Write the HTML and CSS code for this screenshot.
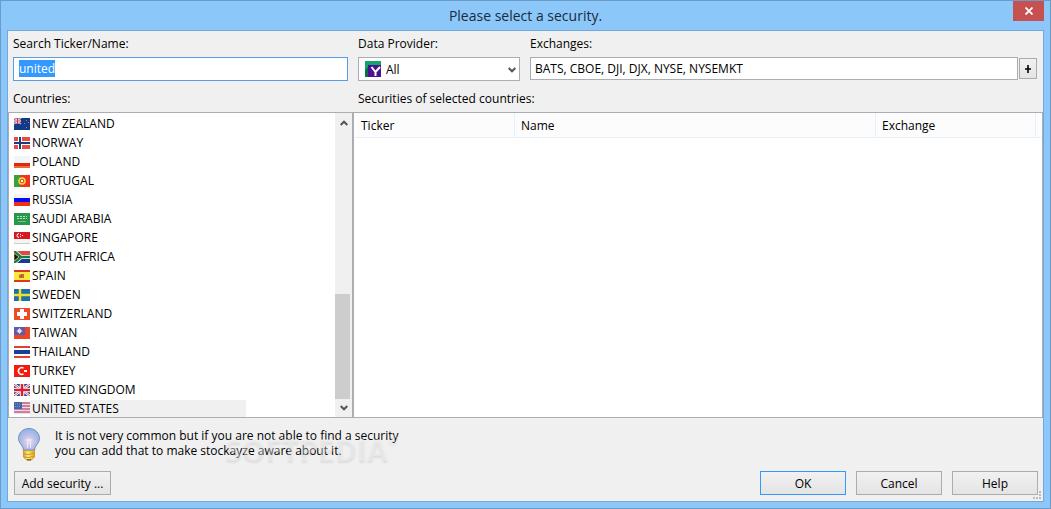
FILE: index.html
```html
<!DOCTYPE html>
<html lang="en">
<head>
<meta charset="utf-8">
<title>Please select a security.</title>
<link rel="stylesheet" href="styles.css">
</head>
<body>
<div class="window">
  <header class="titlebar">
    <h1 class="title">Please select a security.</h1>
    <button class="close" type="button" aria-label="Close"><svg width="8" height="8" viewBox="0 0 8 8"><path d="M.5 .5L7.500 7.500M7.500 .5L.5 7.500" stroke="#fff" stroke-width="1.800"/></svg></button>
  </header>
  <main class="client">
    <form class="filters">
      <div class="field">
        <label for="search">Search Ticker/Name:</label>
        <input class="box search" id="search" type="text" value="united" autocomplete="off" spellcheck="false">
      </div>
      <div class="field">
        <label for="provider">Data Provider:</label>
        <div class="combo">
          <select class="box provider" id="provider"><option>All</option></select>
          <svg class="combo-icon" width="16" height="16" viewBox="0 0 16 16"><path d="M0 0h16v16H0z" fill="#12a66a"/><path d="M0 9l4-4v11H0z" fill="#0b6e48"/><path d="M3 4h13v12H3z" fill="#4b1294"/><path d="M6.500 6L10.500 11 15 6M10.500 10.500V15" fill="none" stroke="#fff" stroke-width="2"/></svg>
          <svg class="combo-arrow" width="8" height="6" viewBox="0 0 8 6"><path d="M.7 1L4 4.300 7.300 1" fill="none" stroke="#555" stroke-width="2"/></svg>
        </div>
      </div>
      <div class="field">
        <label for="exchanges">Exchanges:</label>
        <div class="exchange-row">
          <input class="box exchanges" id="exchanges" type="text" value="BATS, CBOE, DJI, DJX, NYSE, NYSEMKT">
          <button class="button plus" type="button" aria-label="Add exchange"><svg width="8" height="8" viewBox="0 0 8 8"><path d="M1 4h6M4 0v8" stroke="#000" stroke-width="1.600"/></svg></button>
        </div>
      </div>
    </form>

    <div class="panels">
      <section class="panel">
        <h2 class="label" id="countries">Countries:</h2>
        <div class="list">
          <ul class="items" role="listbox" aria-labelledby="countries">
            <li role="option"><svg class="flag" viewBox="0 0 16 12"><path fill="#123a86" d="M0 0h16v12H0z"/><path d="M0 0l7 6M7 0L0 6" stroke="#e9b5c0" stroke-width="1.500"/><path d="M3.500 0v6M0 3h7" stroke="#fff" stroke-width="2"/><path d="M3.500 0v6M0 3h7" stroke="#d4324a"/><path d="M12 2h1v1h-1zM10 5h1v1h-1zM14 4h1v1h-1zM12 9h1v1h-1z" fill="#d96a80"/></svg><span>NEW ZEALAND</span></li>
            <li role="option"><svg class="flag" viewBox="0 0 16 12"><path fill="#e94c3c" d="M0 0h16v12H0z"/><path d="M6 0v12M0 6h16" stroke="#fff" stroke-width="4"/><path d="M6 0v12M0 6h16" stroke="#173d7c" stroke-width="2"/></svg><span>NORWAY</span></li>
            <li role="option"><svg class="flag" viewBox="0 0 16 12"><path fill="#f4f4f4" d="M0 0h16v7H0z"/><path fill="#dc2a12" d="M0 7h16v3H0z"/><path fill="#ef6a35" d="M0 10h16v2H0z"/></svg><span>POLAND</span></li>
            <li role="option"><svg class="flag" viewBox="0 0 16 12"><path fill="#ef3324" d="M0 0h16v12H0z"/><path fill="#39a03c" d="M0 0h6v12H0z"/><circle cx="8" cy="6" r="3" fill="#e34b2c" stroke="#f2dc36" stroke-width="1.500"/><path fill="#fff" d="M7 5h2v2H7z"/></svg><span>PORTUGAL</span></li>
            <li role="option"><svg class="flag" viewBox="0 0 16 12"><path fill="#f4f4f4" d="M0 0h16v4H0z"/><path fill="#0b0bf0" d="M0 4h16v4H0z"/><path fill="#e93216" d="M0 8h16v4H0z"/></svg><span>RUSSIA</span></li>
            <li role="option"><svg class="flag" viewBox="0 0 16 12"><path fill="#27984a" d="M0 0h16v12H0z"/><path d="M3 3.500h10M3 5.500h10" stroke="#b5e0c2" stroke-dasharray="2 1"/><path d="M4 8.500h8" stroke="#74bf8a"/></svg><span>SAUDI ARABIA</span></li>
            <li role="option"><svg class="flag" viewBox="0 0 16 12"><path fill="#f4f4f4" d="M0 0h16v12H0z"/><path fill="#d91821" d="M0 0h16v7H0z"/><path d="M5 1.500a2 2 0 1 0 0 4" fill="none" stroke="#fff"/><path d="M6 2h1v1H6zM8 3h1v1H8zM6 4h1v1H6z" fill="#fff"/><path d="M0 11.500h16" stroke="#ccc"/></svg><span>SINGAPORE</span></li>
            <li role="option"><svg class="flag" viewBox="0 0 16 12"><path fill="#e34a3a" d="M0 0h16v6H0z"/><path fill="#173b95" d="M0 6h16v6H0z"/><path d="M0 0l7 6-7 6M7 6h9" fill="none" stroke="#fff" stroke-width="4"/><path d="M0 0l7 6-7 6M7 6h9" fill="none" stroke="#187a4b" stroke-width="2.500"/><path d="M0 2l5 4-5 4z" fill="#111" stroke="#e5ba37" stroke-width=".8"/></svg><span>SOUTH AFRICA</span></li>
            <li role="option"><svg class="flag" viewBox="0 0 16 12"><path fill="#dd3922" d="M0 0h16v12H0z"/><path fill="#fae93d" d="M0 2h16v8H0z"/><path fill="#c9692f" d="M5 5l2-1h3v4H5z"/><path fill="#8c5b6b" d="M7 5h1v2H7z"/></svg><span>SPAIN</span></li>
            <li role="option"><svg class="flag" viewBox="0 0 16 12"><path fill="#1b71a8" d="M0 0h16v12H0z"/><path d="M6 0v12M0 6h16" stroke="#f4dc36" stroke-width="2.500"/></svg><span>SWEDEN</span></li>
            <li role="option"><svg class="flag" viewBox="0 0 16 12"><path fill="#ee4b25" d="M0 0h16v12H0z"/><path d="M8 1v10M3 6h10" stroke="#fff" stroke-width="4"/></svg><span>SWITZERLAND</span></li>
            <li role="option"><svg class="flag" viewBox="0 0 16 12"><path fill="#ee4524" d="M0 0h16v12H0z"/><path fill="#5c5bad" d="M0 0h11v8H0z"/><circle cx="5.500" cy="4" r="2" fill="#fff"/><path d="M5.500 1v6M2.500 4h6" stroke="#d5d5f0" stroke-width=".8"/></svg><span>TAIWAN</span></li>
            <li role="option"><svg class="flag" viewBox="0 0 16 12"><path fill="#e2412b" d="M0 0h16v12H0z"/><path fill="#fff" d="M0 2h16v8H0z"/><path fill="#173f99" d="M0 4h16v4H0z"/></svg><span>THAILAND</span></li>
            <li role="option"><svg class="flag" viewBox="0 0 16 12"><path fill="#f11b12" d="M0 0h16v12H0z"/><path d="M9.500 3.200a3.300 3.300 0 1 0 0 5.600" fill="none" stroke="#fff" stroke-width="1.500"/><path fill="#fff" d="M10 5h3v2h-3z"/></svg><span>TURKEY</span></li>
            <li role="option"><svg class="flag" viewBox="0 0 16 12"><path fill="#26428d" d="M0 0h16v12H0z"/><path d="M0 0l16 12M16 0L0 12" stroke="#fff" stroke-width="2.500"/><path d="M0 0l16 12M16 0L0 12" stroke="#dc5260"/><path d="M8 0v12M0 6h16" stroke="#fff" stroke-width="4.500"/><path d="M8 0v12M0 6h16" stroke="#d91e36" stroke-width="2.500"/></svg><span>UNITED KINGDOM</span></li>
            <li role="option" class="current"><svg class="flag" viewBox="0 0 16 12"><path fill="#e8dfea" d="M0 0h16v12H0z"/><path d="M0 1h16M0 4h16M0 7h16M0 10h16" stroke="#c85f7c" stroke-width="1.400"/><path fill="#3b68ae" d="M0 0h8v7H0z"/><path d="M1 2h6M1 4.500h6" stroke="#7898cb" stroke-dasharray="1 1"/></svg><span>UNITED STATES</span></li>
          </ul>
          <div class="scrollbar" aria-hidden="true">
            <svg class="arrow" viewBox="0 0 8 6"><path d="M.7 5L4 1.700 7.300 5" fill="none" stroke="#555" stroke-width="2"/></svg>
            <div class="thumb"></div>
            <svg class="arrow" viewBox="0 0 8 6"><path d="M.7 1L4 4.300 7.300 1" fill="none" stroke="#555" stroke-width="2"/></svg>
          </div>
        </div>
      </section>
      <section class="panel">
        <h2 class="label" id="securities">Securities of selected countries:</h2>
        <div class="results">
          <table class="table" aria-labelledby="securities">
            <colgroup><col class="narrow"><col><col class="narrow"><col class="rest"></colgroup>
            <thead><tr><th>Ticker</th><th>Name</th><th>Exchange</th><td></td></tr></thead>
            <tbody></tbody>
          </table>
        </div>
      </section>
    </div>

    <footer class="footer">
      <div class="hint">
        <svg class="bulb" width="24" height="34" viewBox="0 0 24 34">
          <defs>
            <radialGradient id="glass" cx=".5" cy=".6" r=".6"><stop offset="0" stop-color="#f1dfec"/><stop offset=".5" stop-color="#bcbfe8"/><stop offset="1" stop-color="#8fb3e6"/></radialGradient>
            <linearGradient id="brass"><stop offset="0" stop-color="#d9a216"/><stop offset=".4" stop-color="#fff08a"/><stop offset="1" stop-color="#dfa51c"/></linearGradient>
          </defs>
          <path d="M12 1.500C6 1.500 1.500 6 1.500 11.500c0 5 5 7 5 11.500h11c0-4.500 5-6.500 5-11.500C22.500 6 18 1.500 12 1.500z" fill="url(#glass)" stroke="#718fc0"/>
          <path d="M9 12l1.500 2L12 12l1.500 2 1.500-2M10.500 15v6M13.500 15v6" fill="none" stroke="#fff" stroke-opacity=".6"/>
          <path d="M6.500 23q5.500 2 11 0v7l-3 3h-5l-3-3z" fill="url(#brass)" stroke="#c78f18" stroke-width=".8"/>
          <path d="M7 27q5 1.500 10-1M7 30q5 1.500 10-1" fill="none" stroke="#c99422"/>
          <path d="M10 32h4v1.500h-4z" fill="#83692d"/>
        </svg>
        <p class="hint-text">It is not very common but if you are not able to find a security<br>you can add that to make stockayze aware about it.</p>
        <span class="watermark">SOFTPEDIA<sup>®</sup></span>
      </div>
      <div class="actions">
        <button class="button add" type="button">Add security ...</button>
        <button class="button action primary" type="button">OK</button>
        <button class="button action" type="button">Cancel</button>
        <button class="button action" type="button">Help</button>
      </div>
      <svg class="grip" width="8" height="8" viewBox="0 0 8 8"><path d="M6 0h2v2H6zM6 3h2v2H6zM0 6h2v2H0zM3 6h2v2H3zM6 6h2v2H6z" fill="#bbb"/></svg>
    </footer>
  </main>
</div>
<script src="main.js"></script>
</body>
</html>
```

FILE: styles.css
```css
* { box-sizing: border-box; }

body {
  margin: 0;
  font: 12px/15px "Open Sans", "Noto Sans", sans-serif;
  color: #000;
}

button, input, select { font: inherit; color: inherit; margin: 0; }

.window {
  display: flex;
  flex-direction: column;
  min-height: 100vh;
  padding: 0 6px 6px;
  border: 1px solid #6b9bc9;
  background: #8cc7fa;
}

.titlebar {
  position: relative;
  height: 29px;
  display: flex;
  align-items: center;
  justify-content: center;
}
.title { margin: 0; font-size: 14px; line-height: 20px; font-weight: 400; color: #1b2b3a; }
.close {
  position: absolute;
  top: 0;
  right: 0;
  width: 31px;
  height: 20px;
  display: grid;
  place-items: center;
  padding: 0;
  border: 0;
  background: #c75050;
}

.client {
  flex: 1;
  display: flex;
  flex-direction: column;
  border: 1px solid #75a8da;
  background: #f0f0f0;
}

.filters {
  display: grid;
  grid-template-columns: 335px 162px 1fr;
  column-gap: 10px;
  padding: 5px 6px 10px 5px;
}
.field { display: flex; flex-direction: column; gap: 6px; min-width: 0; }
.box {
  display: block;
  width: 100%;
  height: 24px;
  border: 1px solid #abadb3;
  border-radius: 0;
  outline: 0;
  background: #fff;
}
.search { padding: 0 5px 2px; border-color: #569de5; }
.search::selection { background: #3399ff; color: #fff; }
.combo { position: relative; }
.provider { appearance: none; padding: 0 24px 0 27px; }
.combo-icon { position: absolute; left: 7px; top: 4px; }
.combo-arrow { position: absolute; right: 4px; top: 10px; }
.exchange-row { display: flex; align-items: center; gap: 1px; }
.exchanges { flex: 1; min-width: 0; height: 23px; padding: 0 4px; }

.button {
  padding: 0;
  border: 1px solid #acacac;
  background: linear-gradient(#f1f1f1, #e4e4e4);
}
.plus { width: 18px; height: 21px; display: grid; place-items: center; }

.panels {
  flex: 1;
  display: grid;
  grid-template-columns: 345px 1fr;
}
.panel { display: flex; flex-direction: column; gap: 6px; min-width: 0; }
.label { margin: 0; padding-left: 5px; font-size: 12px; font-weight: 400; }
.list, .results { flex: 1; background: #fff; border: 1px solid #abadb3; }

.list { display: flex; }
.items { flex: 1; margin: 0; padding: 1px 0 0; list-style: none; }
.items li { display: flex; align-items: center; height: 19px; padding-left: 5px; }
.items li.current { height: 18px; }
.items span { padding: 1px 2px; }
.items .current span { flex: 0 0 216px; background: #f0f0f0; }
.flag { width: 16px; height: 12px; flex: none; }
.scrollbar {
  width: 17px;
  display: flex;
  flex-direction: column;
  align-items: center;
  padding: 7px 0 6px;
  background: #f0f0f0;
}
.arrow { width: 8px; height: 6px; }
.thumb { width: 15px; height: 105px; margin: auto 2px 6px 0; background: #cdcdcd; }

.results { padding: 0 1px; }
.table { width: 100%; table-layout: fixed; border-collapse: separate; border-spacing: 0; }
.narrow { width: 160px; }
.rest { width: 5px; }
.table th, .table td {
  height: 25px;
  padding: 0 6px;
  border-bottom: 1px solid #e5f0fa;
  text-align: left;
  font-weight: 400;
  background: #fcfcfc;
}
.table th { border-right: 1px solid #e5f0fa; }
.table td { padding: 0; }

.footer { position: relative; padding: 9px 5px 6px; }
.hint { position: relative; display: flex; gap: 14px; padding-left: 4px; height: 44px; }
.hint-text { margin: 0; padding-top: 1px; }
.watermark {
  position: absolute;
  left: 212px;
  top: 5px;
  font: bold 30px/36px "Open Sans", sans-serif;
  color: rgba(245, 245, 245, .4);
  text-shadow: 0 2px 2px rgba(0, 0, 0, .08);
  pointer-events: none;
}
.watermark sup { font-size: 12px; line-height: 16px; vertical-align: top; }
.actions { display: flex; gap: 10px; padding-left: 1px; }
.action { width: 86px; height: 24px; }
.add { width: 97px; height: 24px; margin-right: auto; }
.primary { border-color: #3399ff; }
.grip { position: absolute; right: 2px; bottom: 2px; }
```

FILE: main.js
```js
const search = document.getElementById("search");
search.focus();
search.select();
```
